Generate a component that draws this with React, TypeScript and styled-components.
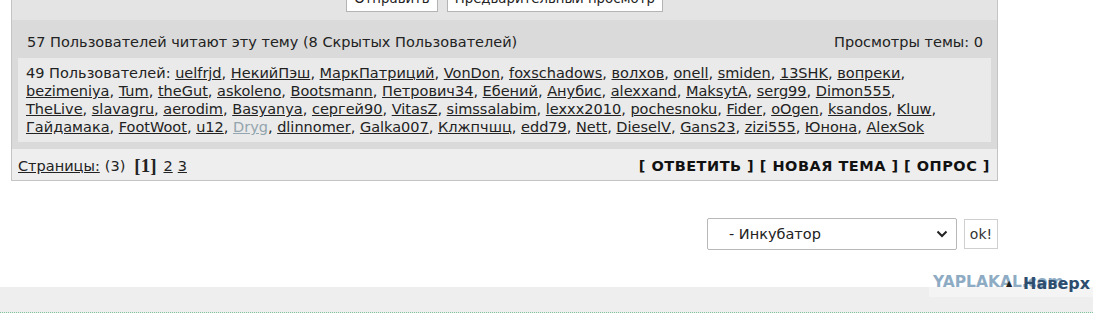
import React from 'react';
import styled, { createGlobalStyle } from 'styled-components';

const GlobalStyle = createGlobalStyle`
  html, body {
    margin: 0;
    padding: 0;
    background: #fff;
  }
  body {
    font-family: 'DejaVu Sans', Verdana, sans-serif;
    font-size: 14.5px;
    color: #222;
  }
`;

const Page = styled.div`
  width: 1093px;
  height: 314px;
  overflow: hidden;
`;

const Topic = styled.div`
  margin-left: 11px;
  width: 985px;
  border: 1px solid #c4c4c4;
  border-top: none;
`;

const FormBar = styled.div`
  height: 20px;
  background: #e4e4e4;
  display: flex;
  justify-content: center;
  gap: 9px;
  overflow: hidden;
`;

const FormButton = styled.button`
  height: 28px;
  margin-top: -16px;
  padding: 0 7px;
  background: #fff;
  border: 1px solid #b4b4b4;
  font-family: inherit;
  font-size: 13.3px;
  color: #222;
`;

const Stats = styled.div`
  background: #dadada;
  padding: 13px 6px 7px;
`;

const StatsHead = styled.div`
  display: flex;
  justify-content: space-between;
  line-height: 18px;
  padding: 0 8px 7px 9px;
`;

const UserList = styled.div`
  background: #eaeaea;
  padding: 6px 8px;
  line-height: 18px;
  white-space: nowrap;
`;

const UserLink = styled.a<{ $hidden?: boolean }>`
  color: ${(p) => (p.$hidden ? '#93a5ae' : '#222')};
  text-decoration: underline;
`;

const BottomRow = styled.div`
  height: 18px;
  background: #eeeeee;
  display: flex;
  justify-content: space-between;
  align-items: center;
  line-height: 18px;
  padding: 8px 7px 5px 6px;
`;

const Pages = styled.div`
  height: 18px;
  display: flex;
  gap: 5px;
  align-items: center;
`;

const PageLink = styled.a`
  color: #222;
  text-decoration: underline;
`;

const Current = styled.b`
  font-family: 'Liberation Serif', 'Times New Roman', serif;
  font-size: 19px;
  line-height: 18px;
  margin: 0 2px 0 4px;
`;

const Actions = styled.div`
  font-weight: bold;
  letter-spacing: 0.5px;
  color: #111;
`;

const JumpRow = styled.div`
  width: 998px;
  display: flex;
  justify-content: flex-end;
  align-items: center;
  gap: 7px;
  margin-top: 37px;
`;

const SelectBox = styled.div`
  width: 219px;
  height: 30px;
  border: 1px solid #b8b8b8;
  border-radius: 2px;
  display: flex;
  align-items: center;
  justify-content: space-between;
  padding: 0 8px 0 21px;
  background: #fff;
`;

const OkButton = styled.button`
  width: 34px;
  height: 30px;
  padding: 0;
  background: #fff;
  border: 1px solid #cfcfcf;
  font-family: inherit;
  font-size: 14px;
  color: #333;
`;

const Band = styled.div`
  position: relative;
  margin-top: 37px;
  height: 25px;
  background: #eeeeee;
  border-bottom: 1px dotted #7cc39a;
`;

const ToTop = styled.div`
  position: absolute;
  right: 3px;
  top: -14px;
  height: 20px;
  display: flex;
  align-items: center;
`;

const Watermark = styled.span`
  position: absolute;
  left: -77px;
  right: -3px;
  top: -4px;
  padding: 4px 0 6px 4px;
  background: rgba(255, 255, 255, 0.35);
  font-family: 'DejaVu Sans', sans-serif;
  font-weight: 900;
  font-size: 15.5px;
  line-height: 18px;
  color: #8eabc4;
  white-space: nowrap;
`;

const UpLink = styled.a`
  position: relative;
  font-weight: bold;
  font-size: 16px;
  color: #2d4d6e;
  text-decoration: none;
  display: flex;
  align-items: center;
  gap: 11px;
`;

const Arrow = styled.span`
  font-size: 8px;
  color: #222;
`;

const lines: string[][] = [
  ['uelfrjd', 'НекийПэш', 'МаркПатриций', 'VonDon', 'foxschadows', 'волхов', 'onell', 'smiden', '13SHK', 'вопреки'],
  ['bezimeniya', 'Tum', 'theGut', 'askoleno', 'Bootsmann', 'Петрович34', 'Ебений', 'Анубис', 'alexxand', 'MaksytA', 'serg99', 'Dimon555'],
  ['TheLive', 'slavagru', 'aerodim', 'Basyanya', 'сергей90', 'VitasZ', 'simssalabim', 'lexxx2010', 'pochesnoku', 'Fider', 'oOgen', 'ksandos', 'Kluw'],
  ['Гайдамака', 'FootWoot', 'u12', 'Dryg', 'dlinnomer', 'Galka007', 'Клжпчшц', 'edd79', 'Nett', 'DieselV', 'Gans23', 'zizi555', 'Юнона', 'AlexSok'],
];

const Chevron = () => (
  <svg width="12" height="8" viewBox="0 0 12 8">
    <path d="M1.5 1.5 L6 6 L10.5 1.5" fill="none" stroke="#222" strokeWidth="2" />
  </svg>
);

export default function App() {
  return (
    <Page>
      <GlobalStyle />
      <Topic>
        <FormBar>
          <FormButton>Отправить</FormButton>
          <FormButton>Предварительный просмотр</FormButton>
        </FormBar>
        <Stats>
          <StatsHead>
            <span>57 Пользователей читают эту тему (8 Скрытых Пользователей)</span>
            <span>Просмотры темы: 0</span>
          </StatsHead>
          <UserList>
            49 Пользователей:{' '}
            {lines.map((line, li) => (
              <React.Fragment key={li}>
                {line.map((name, i) => {
                  const last = li === lines.length - 1 && i === line.length - 1;
                  return (
                    <React.Fragment key={name}>
                      <UserLink href="#" $hidden={name === 'Dryg'}>
                        {name}
                      </UserLink>
                      {last ? '' : i === line.length - 1 ? ',' : ', '}
                    </React.Fragment>
                  );
                })}
                {li < lines.length - 1 && <br />}
              </React.Fragment>
            ))}
          </UserList>
        </Stats>
        <BottomRow>
          <Pages>
            <PageLink href="#">Страницы:</PageLink>
            <span>(3)</span>
            <Current>[1]</Current>
            <PageLink href="#">2</PageLink>
            <PageLink href="#">3</PageLink>
          </Pages>
          <Actions>[ ОТВЕТИТЬ ] [ НОВАЯ ТЕМА ] [ ОПРОС ]</Actions>
        </BottomRow>
      </Topic>
      <JumpRow>
        <SelectBox>
          <span>- Инкубатор</span>
          <Chevron />
        </SelectBox>
        <OkButton>ok!</OkButton>
      </JumpRow>
      <Band>
        <ToTop>
          <Watermark>YAPLAKAL.com</Watermark>
          <UpLink href="#">
            <Arrow>▲</Arrow>
            Наверх
          </UpLink>
        </ToTop>
      </Band>
    </Page>
  );
}
